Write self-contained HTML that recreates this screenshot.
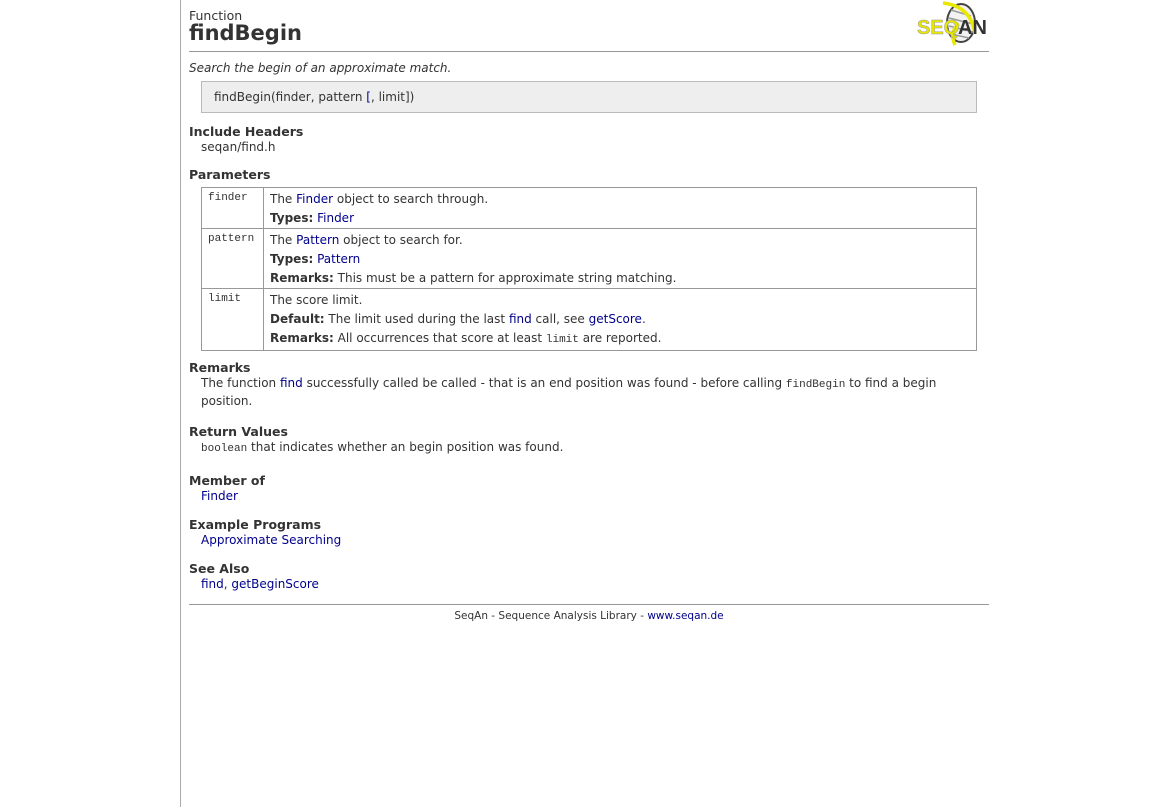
<!DOCTYPE html>
<html><head><meta charset="utf-8"><style>
body{margin:0;background:#fff;font-family:"DejaVu Sans","Liberation Sans",sans-serif;font-size:12px;color:#333;}
.side{position:absolute;left:180px;top:0;width:1px;height:807px;background:#aaa;}
.wrap{position:absolute;left:189px;top:0;width:800px;}
a{color:#00008b;text-decoration:none;}
code,.m{font-family:"Liberation Mono","DejaVu Sans Mono",monospace;font-size:11px;}
h3{font-size:12.5px;font-weight:bold;margin:0;color:#333;}
.ind{margin-left:12px;line-height:16px;}
table{border-collapse:collapse;margin-left:12px;width:776px;margin-top:5px;}
td{border:1px solid #999;vertical-align:top;padding:2px 6px 0 6px;line-height:19px;}
td.m{font-size:11px;line-height:16px;width:49px;}
</style></head><body>
<div class="side"></div>
<div class="wrap">
<div style="position:absolute;top:8px;font-size:12.5px">Function</div>
<div style="position:absolute;top:21px;font-size:21px;font-weight:bold;color:#333">findBegin</div>
<svg style="position:absolute;left:724px;top:0px" width="76" height="46" viewBox="0 0 76 46">
<ellipse cx="48" cy="23" rx="14" ry="19" fill="#f2f2f2" stroke="#444" stroke-width="2"/>
<path d="M38 10 L58 16 M36 18 L60 24 M36 26 L60 32 M38 34 L56 38" stroke="#999" stroke-width="1.5"/>
<path d="M30 3 Q58 6 62 34" stroke="#e8e800" stroke-width="3.5" fill="none"/>
<path d="M42 45 Q36 32 46 24" stroke="#e8e800" stroke-width="3.5" fill="none"/>
<text x="4" y="34" font-family="Liberation Sans" font-weight="bold" font-size="20" fill="#e6e600" stroke="#999" stroke-width="0.5">SEQ</text>
<text x="45" y="34" font-family="Liberation Sans" font-weight="bold" font-size="20" fill="#333">AN</text>
</svg>
<div style="position:absolute;top:51px;width:800px;height:1px;background:#999"></div>
<div style="position:absolute;top:61px;font-style:italic">Search the begin of an approximate match.</div>
<div style="position:absolute;top:81px;left:12px;height:30px;background:#eee;border:1px solid #bbb;line-height:30px;padding-left:12px;width:762px">findBegin(finder, pattern <a>[</a>, limit])</div>
<div style="position:absolute;top:124px;width:800px">
<h3>Include Headers</h3>
<div class="ind">seqan/find.h</div>
<h3 style="margin-top:12px">Parameters</h3>
<table>
<tr><td class="m">finder</td><td>The <a>Finder</a> object to search through.<br><b>Types:</b> <a>Finder</a></td></tr>
<tr><td class="m">pattern</td><td>The <a>Pattern</a> object to search for.<br><b>Types:</b> <a>Pattern</a><br><b>Remarks:</b> This must be a pattern for approximate string matching.</td></tr>
<tr><td class="m">limit</td><td>The score limit.<br><b>Default:</b> The limit used during the last <a>find</a> call, see <a>getScore</a>.<br><b>Remarks:</b> All occurrences that score at least <code>limit</code> are reported.</td></tr>
</table>
<h3 style="margin-top:9px">Remarks</h3>
<div class="ind">The function <a>find</a> successfully called be called - that is an end position was found - before calling <code>findBegin</code> to find a begin position.</div>
<h3 style="margin-top:15px">Return Values</h3>
<div class="ind"><code>boolean</code> that indicates whether an begin position was found.</div>
<h3 style="margin-top:16px">Member of</h3>
<div class="ind"><a>Finder</a></div>
<h3 style="margin-top:13px">Example Programs</h3>
<div class="ind"><a>Approximate Searching</a></div>
<h3 style="margin-top:13px">See Also</h3>
<div class="ind"><a>find</a>, <a>getBeginScore</a></div>
</div>
<div style="position:absolute;top:604px;width:800px;height:1px;background:#999"></div>
<div style="position:absolute;top:610px;width:800px;text-align:center;font-size:10.5px">SeqAn - Sequence Analysis Library - <a>www.seqan.de</a></div>
</div>
</body></html>
